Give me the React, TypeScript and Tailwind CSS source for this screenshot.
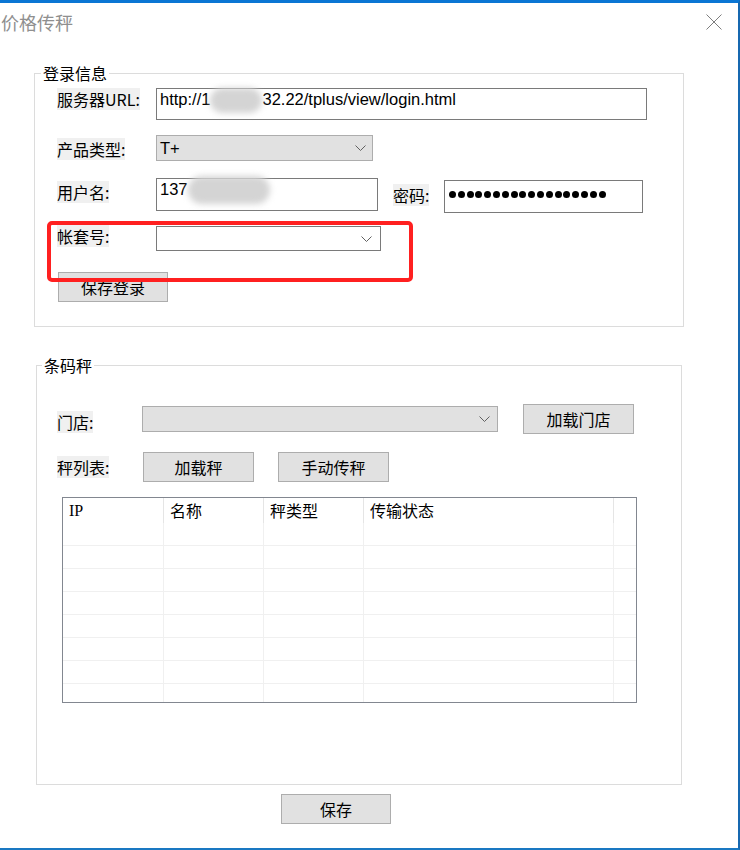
import React from "react";

function Chevron() {
  return (
    <svg width="11" height="6" viewBox="0 0 11 6" className="shrink-0">
      <polyline points="0.5,0.5 5.5,5.5 10.5,0.5" fill="none" stroke="#606060" strokeWidth="1" />
    </svg>
  );
}

function Label({ children }: { children: React.ReactNode }) {
  return <span className="block h-[22px] w-fit bg-[#f0f0f0] leading-[22px]">{children}</span>;
}

function Btn({ children, className = "" }: { children: React.ReactNode; className?: string }) {
  return (
    <button
      className={`flex h-[30px] items-center justify-center border border-[#adadad] bg-[#e1e1e1] text-[16px] leading-none text-black ${className}`}
    >
      {children}
    </button>
  );
}

const headers = ["IP", "名称", "秤类型", "传输状态", ""];

export default function App() {
  return (
    <div className="relative h-[850px] w-[740px] overflow-hidden border-t-[3px] border-r-2 border-b-2 border-t-[#0a76d4] border-r-[#1768b0] border-b-[#1a78c2] bg-white font-['Noto_Sans_CJK_SC',sans-serif] text-[16px] text-black">
      {/* title bar */}
      <div className="flex h-[38px] items-center justify-between">
        <span className="pl-[1px] text-[18px] leading-none text-[#8f8f8f]">价格传秤</span>
        <svg width="16" height="16" viewBox="0 0 16 16" className="mr-[16px]">
          <path d="M0.5 0.5 L15.5 15.5 M15.5 0.5 L0.5 15.5" stroke="#7d7d7d" strokeWidth="1" fill="none" />
        </svg>
      </div>

      {/* 登录信息 */}
      <fieldset className="mt-[23px] ml-[34px] w-[650px] border border-[#dcdcdc] pb-[24px]">
        <legend className="ml-[6px] px-[2px] leading-[18px]">登录信息</legend>

        <div className="mt-[6px] flex items-start pl-[22px]">
          <div className="w-[99px]">
            <Label>服务器URL:</Label>
          </div>
          <div className="flex h-[32px] w-[491px] items-start border border-[#7a7a7a] pl-[3px] font-['Liberation_Sans',sans-serif] text-[16.5px] leading-[20px]">
            <span>http://1</span>
            <span className="-mt-[1px] inline-block h-[25px] w-[52px] rounded-full bg-[#d4d4d4] blur-[3px]" />
            <span>32.22/tplus/view/login.html</span>
          </div>
        </div>

        <div className="mt-[15px] flex items-start pl-[22px]">
          <div className="mt-[3px] w-[99px]">
            <Label>产品类型:</Label>
          </div>
          <div className="flex h-[26px] w-[217px] items-center justify-between border border-[#adadad] bg-[#e1e1e1] pr-[6px] pl-[3px] font-['Liberation_Sans',sans-serif] text-[16.5px]">
            <span>T+</span>
            <Chevron />
          </div>
        </div>

        <div className="mt-[17px] flex items-start pl-[22px]">
          <div className="mt-[3px] w-[99px]">
            <Label>用户名:</Label>
          </div>
          <div className="flex h-[33px] w-[222px] items-start border border-[#7a7a7a] pl-[3px] font-['Liberation_Sans',sans-serif] text-[16.5px] leading-[20px]">
            <span>137</span>
            <span className="-mt-[3px] inline-block h-[28px] w-[82px] rounded-full bg-[#d4d4d4] blur-[3px]" />
          </div>
          <div className="mt-[6px] ml-[15px] w-[51px]">
            <Label>密码:</Label>
          </div>
          <div className="mt-[2px] flex h-[33px] w-[199px] items-start gap-[1.8px] border border-[#7a7a7a] pt-[10px] pl-[4px]">
            {Array.from({ length: 18 }).map((_, i) => (
              <span key={i} className="h-[7px] w-[7px] rounded-full bg-black" />
            ))}
          </div>
        </div>

        <div className="mt-[12px] flex items-start pl-[22px]">
          <div className="w-[99px]">
            <Label>帐套号:</Label>
          </div>
          <div className="mt-[1px] flex h-[25px] w-[225px] items-center justify-end border border-[#7a7a7a] bg-white pr-[8px]">
            <Chevron />
          </div>
        </div>

        <div className="mt-[21px] flex pl-[23px]">
          <Btn className="w-[110px]">保存登录</Btn>
        </div>
      </fieldset>

      {/* 条码秤 */}
      <fieldset className="mt-[29px] ml-[36px] w-[646px] border border-[#dcdcdc] pb-[81px]">
        <legend className="ml-[5px] px-[2px] leading-[18px]">条码秤</legend>

        <div className="mt-[30px] flex items-start pl-[20px]">
          <div className="mt-[7px] w-[85px]">
            <Label>门店:</Label>
          </div>
          <div className="mt-[2px] flex h-[26px] w-[356px] items-center justify-end border border-[#adadad] bg-[#e1e1e1] pr-[7px]">
            <Chevron />
          </div>
          <Btn className="ml-[25px] w-[111px]">加载门店</Btn>
        </div>

        <div className="mt-[18px] flex items-start pl-[20px]">
          <div className="mt-[4px] w-[86px]">
            <Label>秤列表:</Label>
          </div>
          <Btn className="w-[111px]">加载秤</Btn>
          <Btn className="ml-[24px] w-[111px]">手动传秤</Btn>
        </div>

        <div className="mt-[15px] ml-[25px] h-[206px] w-[575px] overflow-hidden border border-[#828790]">
          <div className="grid h-[25px] grid-cols-[101px_100px_100px_250px_1fr]">
            {headers.map((h, i) => (
              <div
                key={i}
                className={`px-[6px] leading-[25px] ${i < 4 ? "border-r border-[#e5e5e5]" : ""} ${
                  i === 0 ? "font-['Liberation_Serif',serif]" : ""
                }`}
              >
                {h}
              </div>
            ))}
          </div>
          {Array.from({ length: 8 }).map((_, r) => (
            <div key={r} className="grid h-[23px] grid-cols-[101px_100px_100px_250px_1fr] border-b border-[#f0f0f0]">
              {headers.map((_, i) => (
                <div key={i} className={i < 4 ? "border-r border-[#f0f0f0]" : ""} />
              ))}
            </div>
          ))}
        </div>
      </fieldset>

      <div className="mt-[9px] flex pl-[281px]">
        <Btn className="w-[110px]">保存</Btn>
      </div>

      {/* red annotation box */}
      <div className="absolute top-[218px] left-[47px] h-[61px] w-[366px] rounded-[5px] border-4 border-[#ff2020]" />
    </div>
  );
}
